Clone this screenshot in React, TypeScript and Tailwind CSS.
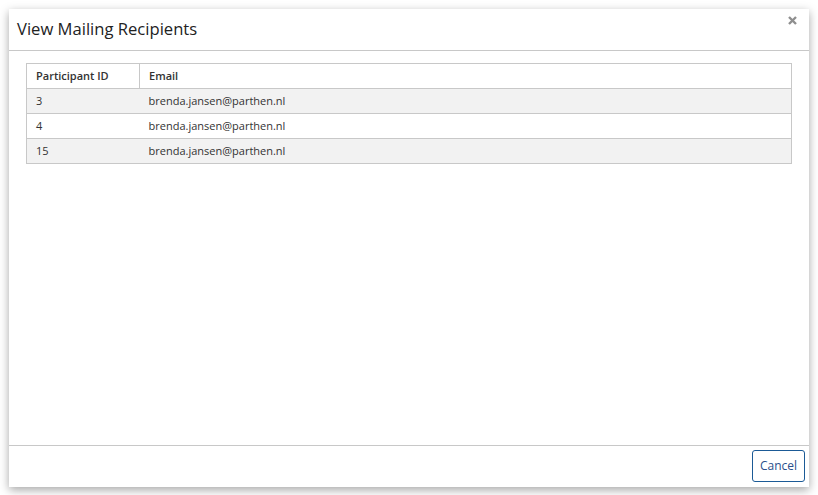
import React from "react";

const recipients = [
  { id: "3", email: "brenda.jansen@parthen.nl" },
  { id: "4", email: "brenda.jansen@parthen.nl" },
  { id: "15", email: "brenda.jansen@parthen.nl" },
];

export default function App() {
  return (
    <div className="h-[495px] w-[818px] bg-white pl-[9px] pt-[9px] font-['Open_Sans',sans-serif] text-[#333]">
      <div className="flex h-[478px] w-[800px] flex-col bg-white shadow-[0_3px_9px_rgba(0,0,0,0.35)]">
        <div className="flex h-[42px] items-start justify-between border-b border-[#c8c8c8] pl-[8px] pr-[12px]">
          <h4 className="pt-[9px] text-[16.6px] font-medium leading-[22px] text-[#222]">View Mailing Recipients</h4>
          <button className="pt-[7px]">
            <svg width="9" height="9" viewBox="0 0 9 9">
              <path d="M1 1 L8 8 M8 1 L1 8" stroke="#8f8f8f" strokeWidth="2.4" />
            </svg>
          </button>
        </div>
        <div className="flex-1 px-[17px] pt-[12px]">
          <table className="w-full border-collapse border border-[#c8c8c8] text-[11px] leading-[16px]">
            <thead>
              <tr className="h-[25px]">
                <th className="w-[113px] border border-[#c8c8c8] px-[9px] text-left font-semibold">Participant ID</th>
                <th className="border border-[#c8c8c8] px-[9px] text-left font-semibold">Email</th>
              </tr>
            </thead>
            <tbody>
              {recipients.map((r, i) => (
                <tr key={i} className={`h-[25px] border-t border-[#c8c8c8] ${i % 2 === 0 ? "bg-[#f2f2f2]" : "bg-white"}`}>
                  <td className="px-[9px]">{r.id}</td>
                  <td className="px-[9px]">{r.email}</td>
                </tr>
              ))}
            </tbody>
          </table>
        </div>
        <div className="flex h-[42px] items-start justify-end border-t border-[#c8c8c8] pr-[4px] pt-[4px]">
          <button className="h-[32px] w-[53px] rounded-[3px] border border-[#1b5a96] text-[12px] text-[#2a4f8c]">Cancel</button>
        </div>
      </div>
    </div>
  );
}
